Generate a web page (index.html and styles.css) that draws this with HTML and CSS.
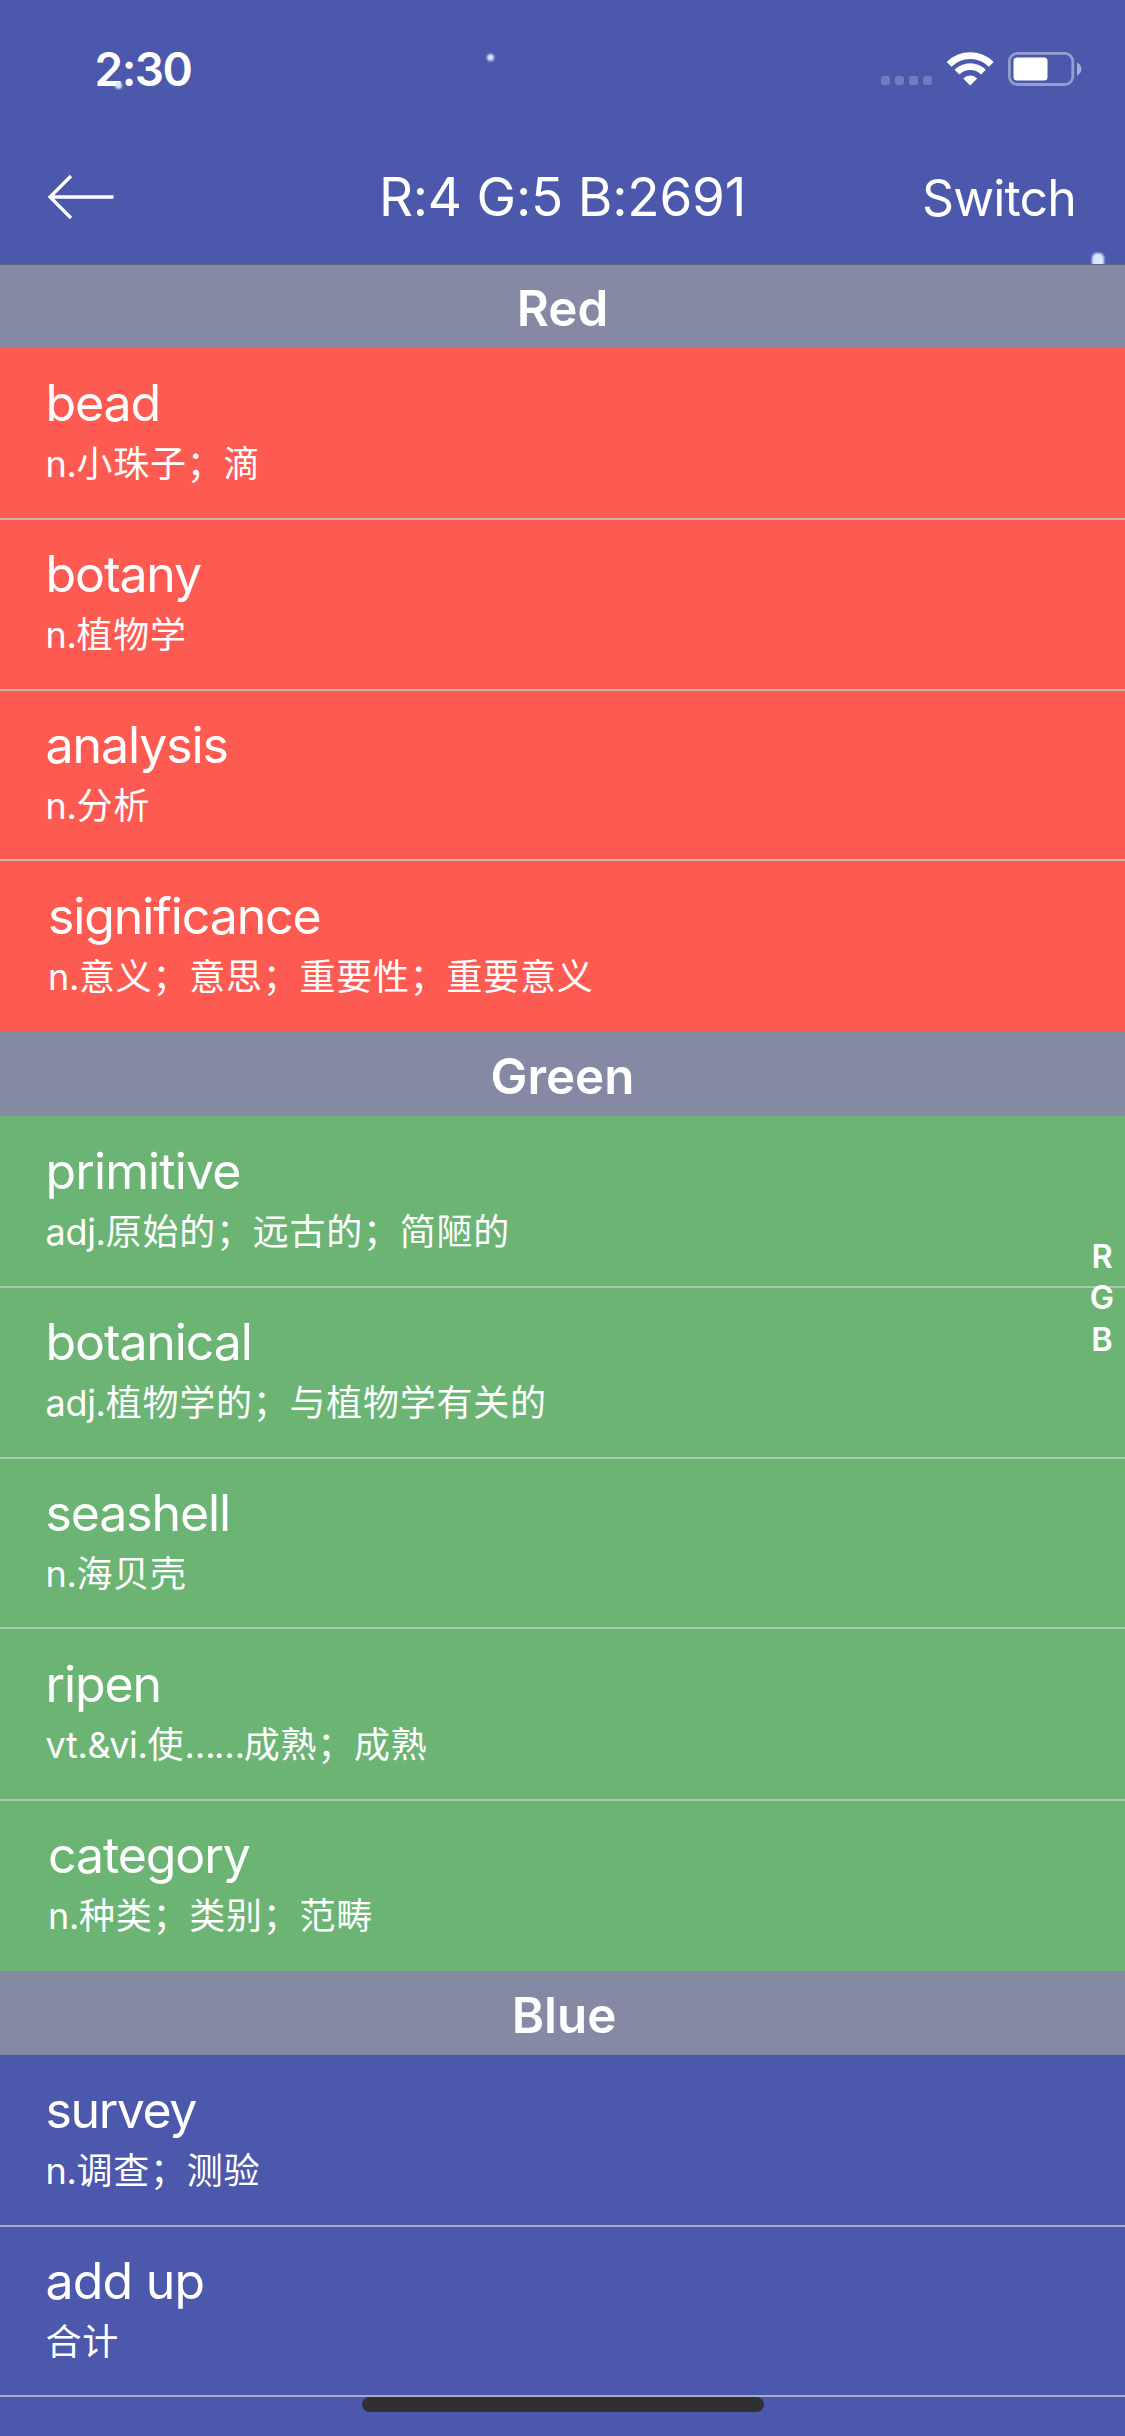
FILE: index.html
```
<!DOCTYPE html>
<html lang="zh-CN">
<head>
<meta charset="utf-8">
<title>RGB Words</title>
<link rel="stylesheet" href="styles.css">
</head>
<body>
<div class="screen">
  <header class="top">
    <div class="status">
      <span class="time">2:30</span>
      <svg class="status-icons" width="202" height="36" viewBox="880 51 202 36">
        <g fill="#fff" fill-opacity=".22">
          <rect x="881" y="76" width="9" height="9" rx="2.8"/>
          <rect x="895" y="76" width="9" height="9" rx="2.8"/>
          <rect x="909" y="76" width="9" height="9" rx="2.8"/>
          <rect x="923" y="76" width="9" height="9" rx="2.8"/>
        </g>
        <g fill="none" stroke="#fff" stroke-width="6.8">
          <path d="M949.1 64.3A29.8 29.8 0 0 1 991.3 64.3"/>
          <path d="M957 72.2A18.6 18.6 0 0 1 983.4 72.2"/>
        </g>
        <path d="M970.2 85.4L963.2 78.4A10 10 0 0 1 977.2 78.4Z" fill="#fff"/>
        <rect x="1009.4" y="53.3" width="63.4" height="31.2" rx="8" fill="none" stroke="#fff" stroke-opacity=".42" stroke-width="2.8"/>
        <rect x="1013.5" y="57.6" width="34" height="22.8" rx="3.5" fill="#fff"/>
        <path d="M1077 62.6C1082.9 65 1082.9 73.2 1077 75.6Z" fill="#fff" fill-opacity=".5"/>
      </svg>
    </div>
    <nav class="nav">
      <svg class="back" width="70" height="48" viewBox="46 173 70 48" fill="none" stroke="#fff" stroke-width="3.3">
        <path d="M113.5 197H50M71 176L50 197L71 218"/>
      </svg>
      <h1 class="title">R:4 G:5 B:2691</h1>
      <span class="switch">Switch</span>
    </nav>
    <i class="flake flake-a"></i>
    <i class="flake flake-b"></i>
    <i class="flake flake-c"></i>
  </header>

  <main>
    <h2 class="section">Red</h2>
    <ul class="group red">
      <li class="row"><div class="word">bead</div><div class="meaning"><span class="pos">n.</span>小珠子；滴</div></li>
      <li class="row"><div class="word">botany</div><div class="meaning"><span class="pos">n.</span>植物学</div></li>
      <li class="row"><div class="word">analysis</div><div class="meaning"><span class="pos">n.</span>分析</div></li>
      <li class="row last"><div class="word">significance</div><div class="meaning"><span class="pos">n.</span>意义；意思；重要性；重要意义</div></li>
    </ul>

    <h2 class="section">Green</h2>
    <ul class="group green">
      <li class="row"><div class="word loose">primitive</div><div class="meaning"><span class="pos">adj.</span>原始的；远古的；简陋的</div></li>
      <li class="row"><div class="word">botanical</div><div class="meaning"><span class="pos">adj.</span>植物学的；与植物学有关的</div></li>
      <li class="row"><div class="word">seashell</div><div class="meaning"><span class="pos">n.</span>海贝壳</div></li>
      <li class="row"><div class="word">ripen</div><div class="meaning"><span class="pos">vt.&amp;vi.</span>使<span class="dots">……</span>成熟；成熟</div></li>
      <li class="row last"><div class="word">category</div><div class="meaning"><span class="pos">n.</span>种类；类别；范畴</div></li>
    </ul>

    <h2 class="section section-blue">Blue</h2>
    <ul class="group blue">
      <li class="row"><div class="word tight">survey</div><div class="meaning"><span class="pos">n.</span>调查；测验</div></li>
      <li class="row"><div class="word phrase">add up</div><div class="meaning">合计</div></li>
      <li class="row"></li>
    </ul>
  </main>

  <aside class="index"><span>R</span><span>G</span><span>B</span></aside>
  <div class="home"></div>
</div>
</body>
</html>
```
FILE: styles.css
```
* { box-sizing: border-box; margin: 0; padding: 0; }

body {
  background: #4b58ab;
  color: #fff;
  font-family: Inter, "Noto Sans CJK SC", sans-serif;
}

.screen {
  position: relative;
  width: 1125px;
  height: 2436px;
  overflow: hidden;
}

/* Status bar and navigation */
.top {
  position: relative;
  height: 265px;
  border-bottom: 1px solid #5f6279;
  overflow: hidden;
}

.status {
  display: flex;
  justify-content: space-between;
  height: 132px;
  padding: 39px 43px 0 94.5px;
}

.time {
  font-size: 46px;
  font-weight: 600;
  line-height: 60px;
  letter-spacing: -1.5px;
}

.status-icons { margin-top: 12px; }

.nav {
  display: grid;
  grid-template-columns: 1fr auto 1fr;
  align-items: center;
  height: 130px;
  padding: 0 49px 0 46px;
}

.back { display: block; }

.title {
  padding-left: 3px;
  font-size: 53px;
  font-weight: 400;
  line-height: 64px;
  letter-spacing: -0.2px;
}

.switch {
  justify-self: end;
  padding-top: 1px;
  font-size: 50px;
  line-height: 64px;
  letter-spacing: -0.85px;
}

/* Falling flakes over the bar */
.flake {
  position: absolute;
  border-radius: 50%;
  background: #d6e9ff;
  filter: blur(1px);
}

.flake-a { left: 487px; top: 54px; width: 7px; height: 7px; }
.flake-b { left: 115px; top: 82px; width: 7px; height: 7px; }
.flake-c { left: 1092px; top: 253px; width: 12px; height: 16px; border-radius: 5px; }

/* Word list */
.section {
  height: 84px;
  padding-top: 4px;
  background: #8589a4;
  font-size: 49.3px;
  font-weight: 600;
  line-height: 80px;
  text-align: center;
}

.section:first-child { height: 83px; padding-top: 3px; }
.section-blue { padding-left: 3px; }

.group { list-style: none; }
.red { height: 684px; background: #fd5b52; }
.green { height: 855px; background: #6bb473; }
.blue { background: #4b58ab; }

.row {
  height: 170px;
  padding: 25px 0 0 45.5px;
}

.row + .row {
  padding-top: 24px;
  border-top: 2px solid rgba(200, 199, 204, 0.75);
}

.row:nth-child(even) { height: 171px; }
.row:nth-child(4) { height: 172px; padding-top: 25px; }
.blue .row:nth-child(2) { height: 170px; }
.row.last { padding-left: 48px; }

.word {
  font-size: 50px;
  line-height: 60px;
  letter-spacing: -1.1px;
}

.loose { letter-spacing: -0.9px; }
.tight { letter-spacing: -1.4px; }
.phrase { letter-spacing: -0.8px; }

.meaning {
  margin-top: 9px;
  font-size: 36px;
  line-height: 44px;
  letter-spacing: 0.75px;
}

.pos { letter-spacing: -0.3px; }
.dots { letter-spacing: -1.4px; }

/* Section index on the right edge */
.index {
  position: absolute;
  top: 1235.5px;
  right: 10.5px;
  display: flex;
  flex-direction: column;
  width: 25px;
  font-size: 32.5px;
  font-weight: 600;
  line-height: 41.5px;
  text-align: center;
}

/* Home indicator */
.home {
  position: absolute;
  left: 362px;
  top: 2397px;
  width: 402px;
  height: 15px;
  border-radius: 8px;
  background: #303030;
}
```
